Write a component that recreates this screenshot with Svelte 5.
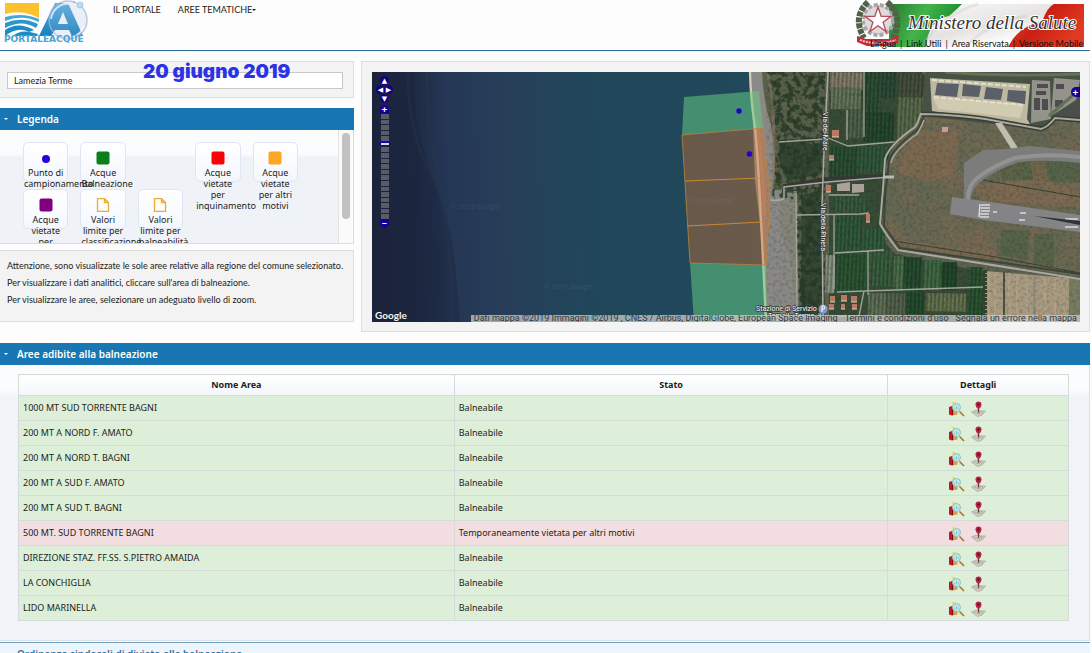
<script>
  const areas = [
    ['1000 MT SUD TORRENTE BAGNI', true],
    ['200 MT A NORD F. AMATO', true],
    ['200 MT A NORD T. BAGNI', true],
    ['200 MT A SUD F. AMATO', true],
    ['200 MT A SUD T. BAGNI', true],
    ['500 MT. SUD TORRENTE BAGNI', false],
    ['DIREZIONE STAZ. FF.SS. S.PIETRO AMAIDA', true],
    ['LA CONCHIGLIA', true],
    ['LIDO MARINELLA', true],
  ];
  const legend = [
    { text: 'Punto di campionamento', kind: 'dot', color: '#2a00e0' },
    { text: 'Acque Balneazione', kind: 'box', color: '#0a7f1c' },
    null,
    { text: 'Acque vietate per inquinamento', kind: 'box', color: '#fb0007' },
    { text: 'Acque vietate per altri motivi', kind: 'box', color: '#fba625' },
    { text: 'Acque vietate per', kind: 'box', color: '#80007f' },
    { text: 'Valori limite per classificazione', kind: 'page', color: '#eda93b' },
    { text: 'Valori limite per balneabilità', kind: 'page', color: '#eda93b' },
  ];
  const levels = Array.from({ length: 19 }, (_, i) => i);

  // [x, y, width, height, colour] of the cultivated plots
  const plots = [
    [830, 72, 34, 18, '#8a7c68'], [831, 87, 30, 22, '#66745a'], [863, 72, 18, 55, '#2b4a34'],
    [846, 110, 18, 28, '#4e6248'], [864, 112, 30, 30, '#22442d'], [881, 72, 16, 26, '#2a4733'],
    [898, 74, 28, 22, '#464c3c'], [898, 97, 24, 42, '#5b6a4a'], [829, 146, 28, 34, '#294c30'],
    [858, 146, 32, 26, '#31563a'], [833, 197, 34, 15, '#37583a'], [834, 215, 28, 36, '#2f5736'],
    [863, 228, 22, 24, '#31593a'], [836, 254, 32, 38, '#2a5231'], [870, 250, 22, 36, '#385c3c'],
    [894, 256, 10, 34, '#4c6d48'], [904, 257, 18, 34, '#24492b'], [924, 260, 17, 30, '#3f6942'],
    [942, 262, 15, 28, '#1f4428'], [969, 267, 14, 50, '#28502e'], [887, 293, 18, 28, '#56614a'],
    [907, 292, 17, 22, '#23482a'], [926, 293, 40, 18, '#67714f'], [868, 293, 18, 28, '#627055'],
    [826, 255, 9, 38, '#8b9487'],
  ];
  const houses = [
    [832, 130, 7, 7], [829, 155, 5, 5], [826, 185, 5, 7], [866, 214, 4, 8], [830, 296, 5, 6],
    [841, 295, 6, 6], [851, 296, 6, 6], [829, 304, 5, 5], [841, 304, 4, 5], [852, 304, 5, 5],
  ];
</script>

{#snippet analysisIcon()}
  <svg width="17" height="16" viewBox="0 0 17 16" aria-hidden="true">
    <path d="M0 6l3-1v9.500l-3-1z" fill="#c4162a" /><path d="M3 5l1.500 1v8L3 14.500z" fill="#7e0a18" />
    <path d="M3.500 0.500l3 1v3h-3z" fill="#ecd65b" /><path d="M4.500 10h4v3.500l-4 .8z" fill="#dd9a45" />
    <circle cx="7.500" cy="6.500" r="4" fill="#c4e9ea" stroke="#86bfc5" stroke-width="1" />
    <path d="M5.800 6.500v2M7.500 4.500v4M9.200 6v2" stroke="#8ccbbd" fill="none" />
    <path d="M10.500 10.500l4.500 4.500" stroke="#a77942" stroke-width="1.700" />
  </svg>
{/snippet}

{#snippet pinIcon()}
  <svg width="15" height="16" viewBox="0 0 15 16" aria-hidden="true">
    <path d="M.5 11l5-2 4.500 1 4.500 0-3.500 4-4.500 1.500z" fill="#d3d0c4" stroke="#a5a89b" stroke-width=".8" />
    <path d="M3 11l6 2M6 13l5-3M10 13l2-2" stroke="#a0a496" stroke-width=".8" />
    <path d="M7.500 5v6.500" stroke="#76303b" stroke-width="1.300" />
    <path d="M4.500 3.500a3 3 0 0 1 6 0q0 2-2 4h-2q-2-2-2-4z" fill="#b32843" />
    <circle cx="7.500" cy="3.500" r="1.200" fill="#651020" />
  </svg>
{/snippet}

<div class="page">
  <header>
    <a class="logo" href="#home" aria-label="Portale Acque">
      <svg width="90" height="45" viewBox="0 0 90 45">
        <defs>
          <linearGradient id="water" x2="0" y2="1"><stop stop-color="#58aee0" /><stop offset="1" stop-color="#1481bb" /></linearGradient>
        </defs>
        <path d="M5 3h34v15Q22 9 5 14z" fill="#fcc12c" />
        <path d="M5 17q18-5 34 2v3Q22 14 5 21z" fill="#45a8d9" />
        <path d="M5 23q17-7 33 1l-2 4Q22 19 5 28z" fill="#2b97cd" />
        <path d="M5 30q13-9 29 0l-5 2Q18 26 5 36z" fill="#1d8bc4" />
        <path d="M13 36q8-8 25-2l-1 2z" fill="#1d8bc4" />
        <path d="M39 36L55 3h13l15 33H72l-3-6H55l-4 6zM58 24h10l-5-12z" fill="url(#water)" fill-rule="evenodd" />
        <circle cx="68" cy="20" r="19" fill="#9fb4dd" fill-opacity=".2" stroke="#a7b2d9" stroke-opacity=".7" stroke-width="1.500" />
        <path d="M51 19a17 17 0 0 1 19-15M84 26a17 17 0 0 1-12 11" fill="none" stroke="#eff3ff" stroke-width="2" opacity=".8" />
        <circle cx="80" cy="5" r="3" fill="#b8def2" stroke="#8ab9dc" stroke-width=".6" /><circle cx="74" cy="2" r="1" fill="#8ab9dc" />
        <text x="4" y="42" class="logo-text">PORTALEACQUE</text>
      </svg>
    </a>
    <nav class="main-nav">
      <a href="#portale">IL PORTALE</a>
      <a href="#aree">AREE TEMATICHE<i class="caret"></i></a>
    </nav>
    <div class="ministry">
      <svg width="232" height="48" viewBox="0 0 232 48" aria-hidden="true">
        <defs>
          <linearGradient id="green" x2="1" y2=".3"><stop stop-color="#26772d" /><stop offset=".5" stop-color="#44b44a" /><stop offset="1" stop-color="#168b2b" /></linearGradient>
          <linearGradient id="white" x2="1" y2="1"><stop stop-color="#fff" /><stop offset=".5" stop-color="#e5e3e2" /><stop offset=".75" stop-color="#fff" /><stop offset="1" stop-color="#d9d5d3" /></linearGradient>
          <linearGradient id="red" x2="1" y2=".5"><stop stop-color="#f0543c" /><stop offset=".5" stop-color="#c92012" /><stop offset="1" stop-color="#e03b22" /></linearGradient>
        </defs>
        <path d="M36 4h195v43H36z" fill="url(#white)" />
        <path d="M36 4h73q-8 8-13 12-21 4-23 31H36z" fill="url(#green)" />
        <path d="M231 4h-30q-7 3-12 18-23 3-34 25h76z" fill="url(#red)" />
        <path d="M68 47Q90 14 125 4M112 47q25-25 62-31" fill="none" stroke="#bbb" stroke-width="3" opacity=".25" />
        <text x="55" y="29" class="script">Ministero della Salute</text>
        <circle cx="25" cy="20" r="15" fill="#d8d5d6" stroke="#a9a5a8" stroke-width="4" stroke-dasharray="4 2" />
        <circle cx="25" cy="20" r="13" fill="#dedbdd" />
        <path d="M15 2Q-1 17 11 38M34 2q17 15 6 36" fill="none" stroke="#526248" stroke-width="6" stroke-dasharray="5 1" />
        <path d="M25 7l3.200 9.300h9.800l-7.900 5.900 3 9.300-8.100-5.700-8.100 5.700 3-9.300-7.900-5.900h9.800z" fill="#fff" stroke="#b84a59" stroke-width="1.300" />
        <path d="M4 36q6 2 9 3h24l9-4-1 8-10 3H14L4 42z" fill="#bf2d38" />
        <path d="M7 40q17 6 36 0" stroke="#edc4c4" stroke-width="2" stroke-dasharray="2 1" fill="none" />
      </svg>
      <nav class="top-links">
        <a href="#lingua">Lingua</a><span>|</span><a href="#link">Link Utili</a><span>|</span><a href="#area">Area Riservata</a><span>|</span><a href="#mobile">Versione Mobile</a>
      </nav>
    </div>
  </header>

  <main>
    <div class="overview">
      <aside>
        <section class="panel search">
          <input aria-label="Comune" value="Lamezia Terme" />
          <strong class="date">20 giugno 2019</strong>
        </section>
        <section class="legend-section">
          <h2><i class="caret"></i>Legenda</h2>
          <div class="legend">
            <div class="legend-items">
              {#each legend as item}
                {#if item}
                  <div class="legend-item">
                    <svg width="14" height="14" viewBox="0 0 14 14" aria-hidden="true">
                      {#if item.kind === 'dot'}
                        <circle cx="7" cy="8" r="4" fill={item.color} />
                      {:else if item.kind === 'box'}
                        <rect x=".5" y=".5" width="13" height="13" rx="2" fill={item.color} />
                      {:else}
                        <path d="M1.500.5h7l4 4v9h-11zM8.500.5v4h4" fill="#fffdf8" stroke={item.color} stroke-width="1.300" />
                      {/if}
                    </svg>
                    <span>{item.text}</span>
                  </div>
                {:else}
                  <div></div>
                {/if}
              {/each}
            </div>
            <div class="track"><div class="thumb"></div></div>
          </div>
        </section>
        <section class="panel notes">
          <p>Attenzione, sono visualizzate le sole aree relative alla regione del comune selezionato.</p>
          <p>Per visualizzare i dati analitici, cliccare sull'area di balneazione.</p>
          <p>Per visualizzare le aree, selezionare un adeguato livello di zoom.</p>
        </section>
      </aside>

      <section class="panel map-panel">
        <div class="map">
          <svg class="terrain" viewBox="372 72 708 250" preserveAspectRatio="xMaxYMid slice" role="img" aria-label="Mappa satellitare">
            <defs>
              <linearGradient id="sea" gradientUnits="userSpaceOnUse" x1="372" y1="190" x2="755" y2="180">
                <stop stop-color="#1e2740" /><stop offset=".12" stop-color="#1f2b45" /><stop offset=".2" stop-color="#243756" />
                <stop offset=".36" stop-color="#273f59" /><stop offset=".55" stop-color="#21465a" /><stop offset="1" stop-color="#20495b" />
              </linearGradient>
              <filter id="grain" x="0" y="0" width="1" height="1" color-interpolation-filters="sRGB">
                <feTurbulence type="fractalNoise" baseFrequency=".3" numOctaves="3" seed="8" />
                <feColorMatrix values="0 0 0 0 .05  0 0 0 0 .08  0 0 0 0 .05  2.500 0 0 0 -1.100" />
              </filter>
              <filter id="blotches" x="0" y="0" width="1" height="1" color-interpolation-filters="sRGB">
                <feTurbulence type="fractalNoise" baseFrequency=".03 .04" numOctaves="3" seed="5" />
                <feColorMatrix values="0 0 0 0 .54  0 0 0 0 .42  0 0 0 0 .33  2.500 0 0 0 -.9" />
              </filter>
              <filter id="trees" x="0" y="0" width="1" height="1" color-interpolation-filters="sRGB">
                <feTurbulence type="fractalNoise" baseFrequency=".16" numOctaves="3" seed="3" />
                <feColorMatrix values="0 0 0 0 .14  0 0 0 0 .22  0 0 0 0 .15  7 0 0 0 -3.100" />
              </filter>
              <pattern id="rows" width="4" height="6" patternUnits="userSpaceOnUse" patternTransform="rotate(2)">
                <path d="M1 0v6" stroke="#10251a" stroke-width="1.500" opacity=".4" /><path d="M3 0v4" stroke="#7c9472" stroke-width=".5" opacity=".35" />
              </pattern>
              <clipPath id="infield"><path d="M921 115l70 6 49 9 14-10 26 3v154l-180-31-17-18 3-63 9-24 26-20z" /></clipPath>
              <clipPath id="wood"><path d="M766 72h59v250h-26l-3-122-24-4 4-50z" /></clipPath>
            </defs>
            <path d="M372 72h400v250H372z" fill="url(#sea)" />
            <path d="M415 72q-5 50 18 105t27 145h-88V72z" fill="#181f31" opacity=".3" />
            <path d="M408 72q0 60 22 100t22 150M427 72q-3 80 26 145l8 105" fill="none" stroke="#2a3d4d" stroke-width="3" opacity=".25" />
            <path d="M749 72h331v250H766l-2-68-8-89z" fill="#5d6250" />

            <!-- beach and pine wood -->
            <path d="M764 72h61v250h-28V192l-27 0z" fill="#5a6149" />
            <path d="M751 72h11q1 28 9 53 6 35 2 65l24 1 1 130h-32l-3-70-8-70z" fill="#8a8985" />
            <path d="M781 188l16-3 2 136h-3l-5-60-12-35z" fill="#84847a" />
            <g clip-path="url(#wood)"><rect x="764" y="72" width="62" height="250" filter="url(#trees)" opacity=".8" /></g>
            <path d="M779 140l15-1 28 8-1 27-33 7-8-16zM801 195l22-5-1 130-20 2z" fill="#263c2a" opacity=".7" />
            <path d="M768 74q6 35 6 65t-1 50" fill="none" stroke="#8a7565" stroke-width="3" opacity=".6" />
            <path d="M750 72q1 30 4 48t7 100l5 102" fill="none" stroke="#dfcdb7" stroke-width="2.300" />
            <path d="M758 121q5 62 7 95" fill="none" stroke="#cc886e" stroke-width="3" opacity=".5" />

            <!-- plots, lanes and houses -->
            <path d="M829 72h65l28 0 0 42-32 42-10 80 15 18 90 18v50H829z" fill="#384b36" />
            {#each plots as [x, y, width, height, fill]}
              <g transform="rotate(1 {x} {y})"><rect {x} {y} {width} {height} {fill} /><rect {x} {y} {width} {height} fill="url(#rows)" /></g>
            {/each}

            <!-- airfield ground -->
            <path d="M921 115l70 6 49 9 14-10 26 3v154l-180-31-17-18 3-63 9-24 26-20z" fill="#656853" />
            <g clip-path="url(#infield)">
              <rect x="880" y="110" width="200" height="170" filter="url(#blotches)" opacity=".45" />
              <path d="M999 166l30-8 40 0 11 3v22l-78-3zM1002 230h28l-2 30-29-5zM1035 234h19v33l-20-3z" fill="#4a6043" opacity=".6" />
              <path d="M918 130l40 2-1 40-28 10-31-9 7-19zM975 184l70-5 35 15v14l-98-8zM889 239l110 13 0 12-100-18zM1030 162l15-1 6 26-17-2z" fill="#8b6a50" opacity=".5" />
              <path d="M888 240l102 16 90 17M977 179l103 18" stroke="#364331" fill="none" />
            </g>
            <path d="M985 271l84 7 1 44h-85z" fill="#a89a80" /><path d="M1069 278l11 1v43h-11z" fill="#777c63" />
            <path d="M989 272v48M995 272v48M1009 272v49M1017 275v46M1027 275v46M1045 278v42M1055 279v41" stroke="#c1b296" opacity=".6" />
            <path d="M1004 272v49" stroke="#4d5140" stroke-width="2" /><path d="M1034.500 275v46" stroke="#8d8a7c" stroke-width="2" />
            <path d="M985 270v50" stroke="#34432c" stroke-width="4" stroke-dasharray="3 1" />
            <path d="M766 72h314v250H766z" filter="url(#grain)" opacity=".2" />

            <path d="M828 138l20 8 46-4M796 191l1 131M797 215l63-1 9-1M834 214v75M835 253l49-3M837 292l146-5M868 250v45M829 195h30M847 140v-30M864 72v65M779 142l46-3M829 316h30l5-25" fill="none" stroke="#a1a496" stroke-width="1.300" />
            <path d="M783 187l41-7 65-4" fill="none" stroke="#343a33" stroke-width="5" />
            <path d="M770 200q12 1 14-2l0-11 43-5 63-5M828 72l-4 80-2 53 1 117" fill="none" stroke="#aaa8a5" stroke-width="1.500" />
            {#each houses as [x, y, width, height]}
              <rect {x} {y} {width} {height} fill="#b77a60" /><path d="M{x} {y + height}h{width}" stroke="#ddd0be" />
            {/each}
            <path d="M837 184l13-2v9h-13zM852 184l12 0v8l-12 1z" fill="#aaa298" />

            <!-- airfield buildings, taxiways and runway -->
            <path d="M926 72h154v48l-26-3-15 12-118-13z" fill="#485244" />
            <path d="M930 78l100 6-3 35 3 5-14 0-84-13z" fill="#bdb9a0" />
            <path d="M933 97l91 7-4 14-82-9z" fill="#d1ccb1" />
            <path d="M937 83l22 1-2 13-22-2zM963 84l18 2-2 11-17-1zM986 87l17 2-2 11-17-1zM1008 90l18 1-1 13-18-3z" fill="#5a5f68" />
            <path d="M932 80l94 7M934 97l90 8" fill="none" stroke="#e5dfcc" stroke-width="2" stroke-dasharray="5 2" />
            <path d="M1032 80l18 1 1 38-20 4zM1054 78l26 2-4 20-25 16z" fill="#93938b" />
            <path d="M1037 84h11v4h-11zM1036 91h10v4h-10zM1034 98h6v12h-6zM1042 99h6v11h-6zM1056 84h8v5h-8zM1055 100h8v7h-8zM1067 107h12v8h-12z" fill="#4e4c50" />
            <path d="M945 72q63 5 135 2M1049 116l31-27" fill="none" stroke="#647156" stroke-width="3" />
            <path d="M921 114q45 1 75 7l45 8q7-2 14-11l25 2" fill="none" stroke="#373e35" stroke-width="5" />
            <path d="M921 114q45 1 75 7l45 8q7-2 14-11l25 2M921 113q-3 10-6 14-26 18-30 32l-2 30-3 35q7 12 18 26l182 29" fill="none" stroke="#aaa89f" stroke-width="2" />
            <path d="M924 116q-4 10-7 14-26 20-28 31l-4 36-1 29 16 22 180 26" fill="none" stroke="#3d453b" stroke-width="2" />
            <path d="M924 120q-4 10-7 14-24 17-26 29" fill="none" stroke="#aaa89f" stroke-width="1.500" />
            <path d="M995 123l7 0 16 25-6 2z" fill="#bebdb0" />
            <path d="M983 150l24-1 22-3 51 5v12q-35-4-61-1-24 8-40 21-10 9-8 22h-7V163z" fill="#7c7c7b" />
            <path d="M1080 157q-35-4-65 1-22 8-38 20-10 8-9 25" fill="none" stroke="#929293" stroke-width="4" />
            <path d="M952 197l32 4 96 14v17l-96-12-34-6z" fill="#848386" />
            <path d="M980 204l-1 13M981 205h9M981 208h9M981 211h9M980 214h9M980 217h9M993 212h4M1020 213h6M1019 220h6M1065 219h13M1065 227h13" stroke="#dadadb" stroke-width="1.500" />
            <path d="M1034 216l46 5v4z" fill="#313237" />
            <path d="M883 177h11M942 129h6" stroke="#b8b9b1" stroke-width="3" /><path d="M942 127h6v5h-6z" fill="#c79b9b" />

            <!-- bathing areas -->
            <path d="M684 97l75-6 4 37-81 7z" fill="#65cc85" fill-opacity=".53" />
            <path d="M690 263l76 2 1 57h-73z" fill="#65cc85" fill-opacity=".53" />
            <path d="M682 135l81-7 7 70-4 67-76-2z" fill="#cf7238" fill-opacity=".42" stroke="#bd8438" stroke-width=".8" />
            <path d="M685 181l75-3M687 226l75-4" fill="none" stroke="#d28e30" stroke-width=".9" />
            <circle cx="739" cy="111" r="2.700" fill="#2100cd" /><circle cx="749.500" cy="154" r="2.700" fill="#2100cd" />

            <g class="watermark"><text x="451" y="209">© 2019 Google</text><text x="544" y="289">© 2019 Google</text><text x="684" y="203">© 2019 Google</text></g>
            <g class="map-label">
              <text transform="translate(823 112) rotate(90)">Via del Mare</text>
              <text transform="translate(821 203) rotate(90)">Via della Pineta</text>
              <text x="756" y="311">Stazione di Servizio</text><text x="768" y="318">Tamoil - Terme Ji</text>
            </g>
            <circle cx="823" cy="309" r="4.500" fill="#8398d1" /><path d="M822 312v-6h2q2 2 0 3h-2" fill="none" stroke="#fff" />
          </svg>

          <div class="controls">
            <div class="pan">
              <button aria-label="Nord" class="n">▲</button><button aria-label="Ovest" class="w">◀</button>
              <button aria-label="Est" class="e">▶</button><button aria-label="Sud" class="s">▼</button>
            </div>
            <button aria-label="Ingrandisci" class="zoom plus">+</button>
            <div class="levels">
              {#each levels as level}<i class:current={level === 5}></i>{/each}
            </div>
            <button aria-label="Riduci" class="zoom minus">−</button>
          </div>
          <button class="layers" aria-label="Livelli">+</button>
          <span class="google">Google</span>
          <div class="credits">
            <span>Dati mappa ©2019 Immagini ©2019 , CNES / Airbus, DigitalGlobe, European Space Imaging</span>
            <a href="#termini">Termini e condizioni d'uso</a>
            <a href="#errore">Segnala un errore nella mappa</a>
          </div>
        </div>
      </section>
    </div>

    <section>
      <h2><i class="caret"></i>Aree adibite alla balneazione</h2>
      <div class="areas">
        <table>
          <thead><tr><th class="name">Nome Area</th><th class="state">Stato</th><th>Dettagli</th></tr></thead>
          <tbody>
            {#each areas as [name, allowed]}
              <tr class:banned={!allowed}>
                <td>{name}</td>
                <td>{allowed ? 'Balneabile' : 'Temporaneamente vietata per altri motivi'}</td>
                <td><div class="actions">
                  <button aria-label="Analisi {name}">{@render analysisIcon()}</button>
                  <button aria-label="Posizione {name}">{@render pinIcon()}</button>
                </div></td>
              </tr>
            {/each}
          </tbody>
        </table>
      </div>
    </section>
    <h2 class="closed"><i class="caret"></i>Ordinanze sindacali di divieto alla balneazione</h2>
  </main>
</div>

<style>
  :global(body) { margin: 0; background: #fdfdfd; overflow: hidden; }
  .page { margin-right: 2px; font-family: Lato, sans-serif; font-size: 9px; color: #1c1c22; }
  a { color: inherit; text-decoration: none; }
  button { border: 0; padding: 0; background: none; color: inherit; font-family: inherit; cursor: pointer; }
  .caret { display: inline-block; border: 2px solid transparent; border-top-color: currentColor; border-bottom: 0; }

  header { display: flex; height: 50px; border-bottom: 1px solid #2c6c92; }
  .logo { width: 90px; margin-right: 23px; }
  .logo-text { font-family: "DejaVu Sans", sans-serif; font-size: 9px; font-weight: bold; fill: #4aa3d0; }
  .main-nav { display: flex; gap: 17px; line-height: 19px; }
  .main-nav .caret { margin-bottom: 2px; }
  .ministry { position: relative; margin-left: auto; margin-right: 5px; }
  .script { font-family: "Liberation Serif", serif; font-style: italic; font-size: 19px; fill: #333; stroke: #fff; stroke-width: 2px; paint-order: stroke; }
  .top-links { position: absolute; right: 2px; bottom: 0; display: flex; gap: 4px; line-height: 12px; color: #111; white-space: nowrap; }

  .overview { display: grid; grid-template-columns: 354px minmax(0, 1fr); gap: 7px; padding: 10px 0 11px; }
  .panel { box-sizing: border-box; background: #f3f3f3; border: 1px solid #dedede; }
  aside { display: flex; flex-direction: column; }
  aside .panel { border-left: 0; }
  .search { position: relative; padding: 10px 10px 8px 7px; margin-bottom: 10px; }
  input { display: block; box-sizing: border-box; width: 100%; height: 17px; border: 1px solid #c8c8c8; background: #fff; padding: 0 6px; font-family: inherit; font-size: 9px; color: inherit; }
  .date { position: absolute; left: 143px; top: 0; font-family: Inter, sans-serif; font-size: 19px; font-weight: 900; line-height: 20px; color: #2c33e6; white-space: nowrap; }
  h2 { display: flex; align-items: center; gap: 9px; margin: 0; height: 22px; padding-left: 4px; background: #1876b2; color: #fff; font-family: "Noto Sans", sans-serif; font-size: 10px; font-weight: 600; }
  .legend { display: flex; box-sizing: border-box; height: 114px; border: solid #dcdcdf; border-width: 0 1px 1px 0; background: linear-gradient(#fbfcfe 0 24px, #eff3f8 27px); overflow: hidden; }
  .legend-items { flex: 1; display: grid; grid-template-columns: repeat(5, minmax(0, 1fr)); grid-auto-rows: 40px; gap: 7px 12px; padding: 12px 40px 0 23px; }
  .legend-item { box-sizing: border-box; padding: 8px 0; border: 1px solid #dee6f4; border-radius: 5px; background: linear-gradient(#fff, #f3f7fd); font-family: "Noto Sans", sans-serif; line-height: 11px; text-align: center; }
  .legend-item svg { display: block; margin: 0 auto 2px; }
  .legend-item span { position: relative; z-index: 1; }
  .track { box-sizing: border-box; width: 15px; padding: 3px; border-left: 1px solid #e3e3e5; background: #fafafa; }
  .thumb { width: 8px; height: 86px; border-radius: 4px; background: #c1c1c1; }
  .notes { margin-top: 6px; padding: 6px 7px 13px; }
  .notes p { margin: 0; line-height: 17px; white-space: nowrap; }

  .map-panel { padding: 10px 9px 9px 10px; }
  .map { position: relative; height: 250px; overflow: hidden; background: #20364d; }
  .terrain { display: block; width: 100%; height: 100%; }
  .watermark { fill: #a4b6c1; opacity: .12; font-family: "Noto Sans", sans-serif; font-size: 7px; }
  .map-label { fill: #fff; stroke: #30352f; stroke-width: 1.5px; paint-order: stroke; font-family: Roboto, sans-serif; font-size: 7px; }
  .controls { position: absolute; left: 4px; top: 4px; width: 17px; display: flex; flex-direction: column; align-items: center; color: #fff; }
  .pan { position: relative; width: 17px; height: 28px; margin-bottom: 1px; }
  .pan button { position: absolute; width: 9px; height: 9px; border-radius: 5px; background: #160083; font-family: "DejaVu Sans", sans-serif; font-size: 7px; line-height: 8px; }
  .pan .n { left: 4px; top: 0; } .pan .w { left: 0; top: 9px; } .pan .e { right: 0; top: 9px; } .pan .s { left: 4px; bottom: 1px; }
  .zoom { width: 9px; height: 9px; background: #1a0092; font-size: 10px; font-weight: bold; line-height: 9px; }
  .plus { border-radius: 5px 5px 0 0; } .minus { border-radius: 0 0 5px 5px; }
  .levels { display: grid; grid-template-rows: repeat(19, 1fr); gap: 1px; width: 8px; height: 105px; }
  .levels i { background: #686973; opacity: .8; }
  .levels .current { width: 8px; margin: 0 -1px; border: 1px solid #2000ae; background: #d9d6fa; opacity: 1; }
  .layers { position: absolute; right: 0; top: 15px; width: 9px; height: 10px; border-radius: 5px 0 0 5px; background: #1a0092; color: #fff; font-size: 10px; font-weight: bold; line-height: 10px; }
  .google { position: absolute; left: 3px; bottom: 0; font-size: 10px; font-weight: bold; line-height: 14px; color: #f4f4f4; }
  .credits { position: absolute; right: 0; bottom: 0; display: flex; gap: 7px; height: 7px; padding: 0 3px; background: #c9ccccbf; font-family: Roboto, sans-serif; line-height: 7px; color: #33363a; white-space: nowrap; overflow: hidden; }

  .areas { padding: 9px 20px 19px 18px; border: solid #dcdfe3; border-width: 0 1px 1px 0; background: linear-gradient(#fbfcfe 0 24px, #f0f3f7 34px); }
  table { width: 100%; border-collapse: collapse; table-layout: fixed; font-family: "Noto Sans", sans-serif; font-size: 9px; }
  th, td { box-sizing: border-box; height: 25px; border: 1px solid #d6dbda; padding: 0 4px 2px; }
  th { height: 21px; background: linear-gradient(#fff, #f4f6fa); }
  .name { width: 41.5%; }
  .state { width: 41.3%; }
  tbody tr { background: #ddefd9; }
  tbody .banned { background: #f2dde0; }
  .actions { display: flex; justify-content: center; gap: 5px; padding: 4px 22px 0 0; }
  .actions button, .actions svg { display: block; }
  .closed { margin-top: 1px; border-top: 1px solid #6d9fbe; background: #edf5fc; color: #32719c; }
</style>
